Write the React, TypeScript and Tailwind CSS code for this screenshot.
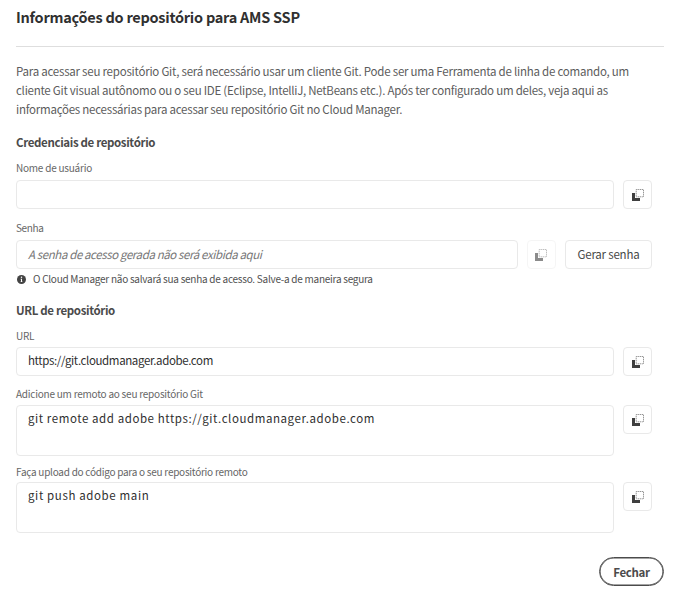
import type { ReactNode } from "react";

function CopyIcon() {
  return (
    <svg className="size-3" viewBox="0 0 12 12" fill="none">
      <path d="M0 4h3v5h5v3H0Z" fill="#3f3f3f" />
      <rect x="4.2" y="0.5" width="7.3" height="7.3" stroke="#8a8a8a" strokeWidth="0.9" strokeDasharray="1.3 0.6" />
    </svg>
  );
}

function CopyButton({ disabled = false }: { disabled?: boolean }) {
  return (
    <button
      aria-label="Copiar"
      disabled={disabled}
      className={
        disabled
          ? "flex h-[29px] w-[29px] shrink-0 items-center justify-center rounded-[4px] border border-[#f0f0f0] pr-[2px] opacity-60"
          : "flex h-[29px] w-[29px] shrink-0 items-center justify-center rounded-[4px] border border-[#e9e9e9]"
      }
    >
      <CopyIcon />
    </button>
  );
}

function Label({ children, className = "tracking-[-0.23px]" }: { children: ReactNode; className?: string }) {
  return <div className={`h-[14px] text-[10px] leading-[14px] text-[#666] ${className}`}>{children}</div>;
}

function Heading({ children }: { children: ReactNode }) {
  return <h2 className="h-[18px] text-[11.5px] font-bold leading-[18px] tracking-[-0.35px] text-[#4b4b4b]">{children}</h2>;
}

const box = "min-w-0 flex-1 rounded-[4px] border border-[#e9e9e9] px-[11px] text-[11.5px]";

export default function App() {
  return (
    <main className="flex h-[589px] w-[694px] flex-col overflow-hidden bg-white pl-4 pr-[30px] font-['Noto_Sans_CJK_SC',sans-serif]">
      <h1 className="mt-[6px] h-[22px] text-[14.5px] font-bold leading-[22px] tracking-[-0.25px] text-[#303030]">
        Informações do repositório para AMS SSP
      </h1>
      <div className="mt-[18px] h-px bg-[#dedede]" />

      <p className="mt-[15px] whitespace-nowrap text-[11.5px] leading-[19px] tracking-[-0.23px] text-[#5c5c5c]">
        Para acessar seu repositório Git, será necessário usar um cliente Git. Pode ser uma Ferramenta de linha de comando, um
        <br />
        <span className="tracking-[-0.245px]">
          cliente Git visual autônomo ou o seu IDE (Eclipse, IntelliJ, NetBeans etc.). Após ter configurado um deles, veja aqui as
        </span>
        <br />
        <span className="tracking-[-0.24px]">informações necessárias para acessar seu repositório Git no Cloud Manager.</span>
      </p>

      <section className="mt-[14px] pr-[12px]">
        <Heading>Credenciais de repositório</Heading>
        <div className="mt-[10px]">
          <Label>Nome de usuário</Label>
          <div className="mt-[5px] flex gap-[9px]">
            <div className={`${box} h-[29px]`} />
            <CopyButton />
          </div>
        </div>
        <div className="mt-[12px]">
          <Label className="tracking-[-0.35px]">Senha</Label>
          <div className="mt-[5px] flex gap-[9px]">
            <div className={`${box} h-[29px] italic leading-[26px] tracking-[-0.4px] text-[#777]`}>
              A senha de acesso gerada não será exibida aqui
            </div>
            <CopyButton disabled />
            <button className="h-[29px] w-[87px] rounded-[4px] border border-[#e9e9e9] pb-[2px] text-[11.5px] leading-[24px] tracking-[-0.2px] text-[#484848]">
              Gerar senha
            </button>
          </div>
          <div className="mt-[3px] flex h-[14px] items-center gap-[7px] pl-px text-[10px] leading-[14px] tracking-[-0.26px] text-[#505050]">
            <svg className="size-[9px]" viewBox="0 0 9 9">
              <circle cx="4.5" cy="4.5" r="4.5" fill="#444" />
              <circle cx="4.5" cy="2.2" r="0.75" fill="#fff" />
              <path d="M3.6 3.8H5V6.4h.5v.6h-2v-.6H4V4.4h-.4Z" fill="#fff" />
            </svg>
            <span className="whitespace-nowrap">O Cloud Manager não salvará sua senha de acesso. Salve-a de maneira segura</span>
          </div>
        </div>
      </section>

      <section className="mt-[15px] pr-[12px]">
        <Heading>URL de repositório</Heading>
        <div className="mt-[10px]">
          <Label>URL</Label>
          <div className="mt-[4px] flex gap-[9px]">
            <div className={`${box} h-[29px] leading-[24px] tracking-[-0.38px] text-[#2f2f2f]`}>
              https://git.cloudmanager.adobe.com
            </div>
            <CopyButton />
          </div>
        </div>
        <div className="mt-[11px]">
          <Label>Adicione um remoto ao seu repositório Git</Label>
          <div className="mt-[4px] flex gap-[9px]">
            <div className={`${box} h-[51px] leading-[24px] tracking-[0.57px] text-[#2f2f2f]`}>
              git remote add adobe https://git.cloudmanager.adobe.com
            </div>
            <CopyButton />
          </div>
        </div>
        <div className="mt-[9px]">
          <Label className="tracking-[-0.257px]">Faça upload do código para o seu repositório remoto</Label>
          <div className="mt-[3px] flex gap-[9px]">
            <div className={`${box} h-[51px] leading-[24px] tracking-[0.62px] text-[#2f2f2f]`}>git push adobe main</div>
            <CopyButton />
          </div>
        </div>
      </section>

      <footer className="mt-[24px] flex justify-end">
        <button className="h-[29px] w-[65px] rounded-full border border-[#4b4b4b] text-[11.5px] font-bold leading-[26px] tracking-[-0.35px] text-[#4b4b4b] ring-[0.6px] ring-inset ring-[#4b4b4b]">
          Fechar
        </button>
      </footer>
    </main>
  );
}
